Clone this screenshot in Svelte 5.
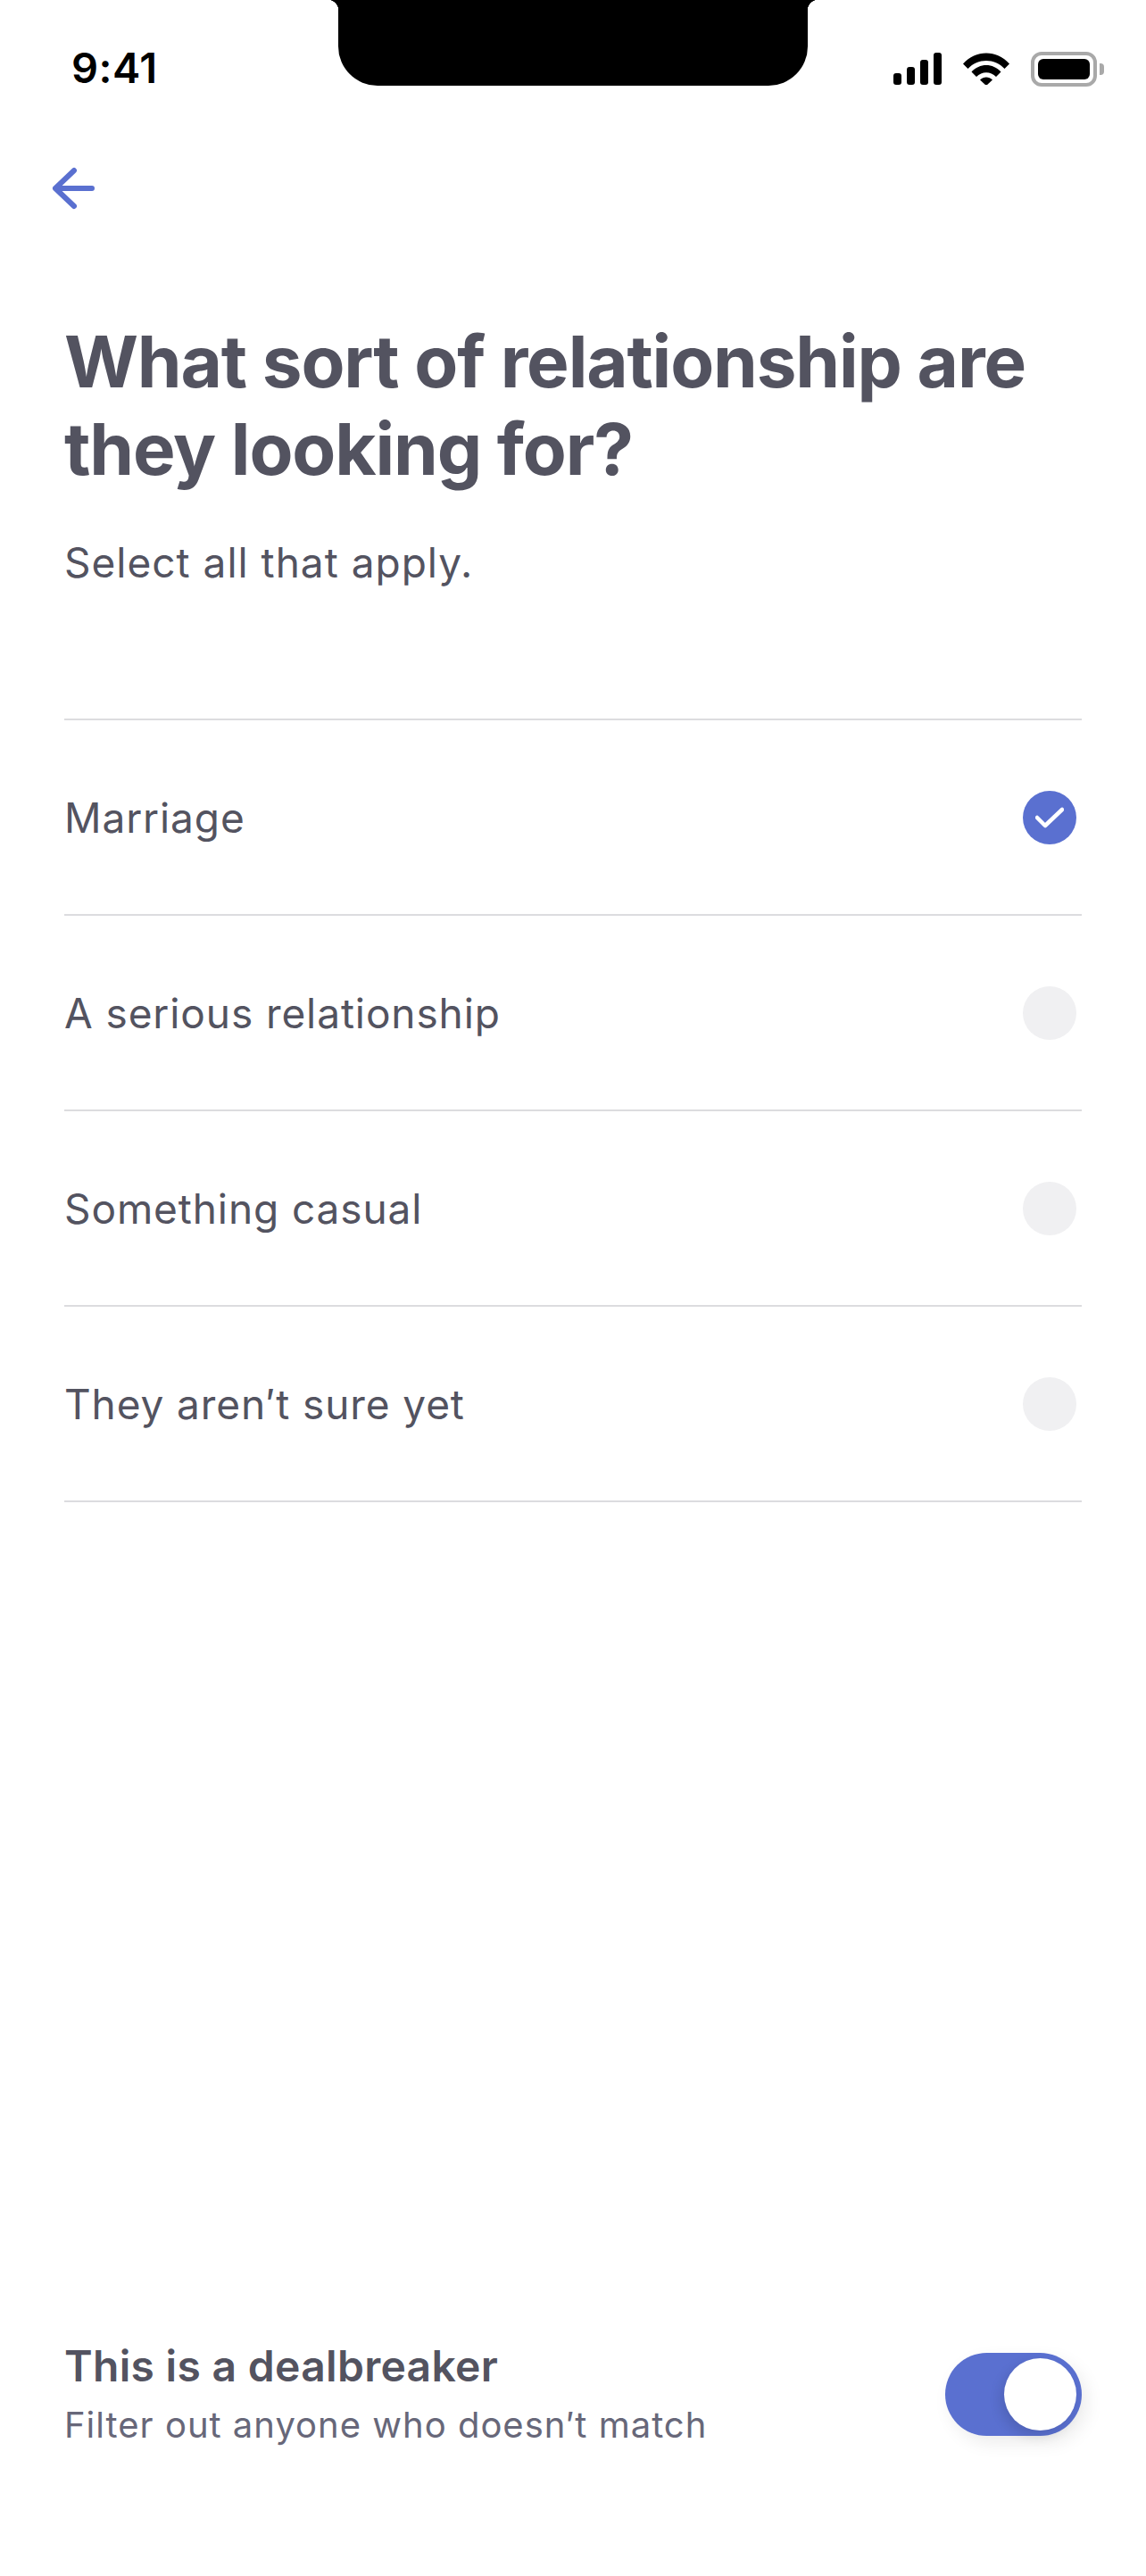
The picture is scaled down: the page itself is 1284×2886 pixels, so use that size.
<script>
    // one row per answer, only the first is picked
    let options = [
        { label: 'Marriage', checked: true },
        { label: 'A serious relationship', checked: false },
        { label: 'Something casual', checked: false },
        { label: 'They aren′t sure yet', checked: false }
    ];
</script>

<main>
    <div class="notch"></div>

    <div class="status">
        <span class="time">9:41</span>
        <div class="status-icons">
            <svg width="54" height="36" viewBox="0 0 54 36" fill="#000">
                <rect x="0" y="23" width="9" height="13" rx="3" />
                <rect x="15" y="16" width="9" height="20" rx="3" />
                <rect x="30" y="8" width="9" height="28" rx="3" />
                <rect x="45" y="0" width="9" height="36" rx="3" />
            </svg>
            <svg width="52" height="36" viewBox="0 0 52 36" fill="#000">
                <path d="M0 12.500C14 -3.500 38 -3.500 52 12.500L46.500 18C35.500 6 16.500 6 5.500 18Z" />
                <path d="M9.500 21.500C18.500 11.500 33.500 11.500 42.500 21.500L37 27C31 20.500 21 20.500 15 27Z" />
                <path d="M19 30.500C23 26.500 29 26.500 33 30.500L26 37Z" />
            </svg>
            <div class="battery">
                <div class="battery-body"><div class="battery-fill"></div></div>
                <div class="battery-cap"></div>
            </div>
        </div>
    </div>

    <button class="back" aria-label="Back">
        <svg width="50" height="48" viewBox="0 0 50 48" fill="none" stroke="#5a70d0" stroke-width="6" stroke-linecap="round" stroke-linejoin="round">
            <path d="M45 24H4M25 4L4 24L25 44" />
        </svg>
    </button>

    <h1>What sort of relationship are they looking for?</h1>
    <p class="hint">Select all that apply.</p>

    <ul class="options">
        {#each options as option}
            <li>
                <span>{option.label}</span>
                {#if option.checked}
                    <span class="radio on">
                        <svg width="32" height="26" viewBox="0 0 32 26" fill="none" stroke="#fff" stroke-width="4.500" stroke-linecap="round" stroke-linejoin="round">
                            <path d="M2 13L11 22L30 4" />
                        </svg>
                    </span>
                {:else}
                    <span class="radio"></span>
                {/if}
            </li>
        {/each}
    </ul>

    <div class="dealbreaker">
        <div>
            <div class="db-title">This is a dealbreaker</div>
            <div class="db-sub">Filter out anyone who doesn′t match</div>
        </div>
        <div class="toggle"><div class="knob"></div></div>
    </div>
</main>

<style>
    :global(body) {
        margin: 0;
        background: #fff;
    }

    main {
        position: relative;
        width: 1284px;
        height: 2886px;
        box-sizing: border-box;
        padding: 0 72px;
        font-family: Inter, "Liberation Sans", sans-serif;
        color: #535360;
        display: flex;
        flex-direction: column;
        overflow: hidden;
    }

    .notch {
        position: absolute;
        top: 0;
        left: 379px;
        width: 526px;
        height: 96px;
        background: #000;
        border-radius: 0 0 44px 44px;
    }

    .notch::before,
    .notch::after {
        content: '';
        position: absolute;
        top: 0;
        width: 12px;
        height: 12px;
    }

    .notch::before {
        left: -12px;
        background: radial-gradient(circle at 0 100%, #fff 12px, #000 12.5px);
    }

    .notch::after {
        right: -12px;
        background: radial-gradient(circle at 100% 100%, #fff 12px, #000 12.5px);
    }

    .status {
        display: flex;
        justify-content: space-between;
        align-items: center;
        height: 60px;
        padding-top: 47px;
        margin: 0 -72px;
        padding-left: 80px;
        padding-right: 47px;
    }

    .time {
        font-size: 47px;
        font-weight: 600;
        letter-spacing: 0.5px;
        color: #000;
        font-family: Inter, sans-serif;
        line-height: 60px;
        margin-top: -3px;
    }

    .status-icons {
        display: flex;
        align-items: center;
        gap: 24px;
    }

    .battery {
        display: flex;
        align-items: center;
        gap: 3px;
    }

    .battery-body {
        width: 74px;
        height: 39px;
        box-sizing: border-box;
        border: 4px solid #a9a9a9;
        border-radius: 12px;
        padding: 4px;
    }

    .battery-fill {
        height: 100%;
        background: #000;
        border-radius: 6px;
    }

    .battery-cap {
        width: 5px;
        height: 13px;
        background: #a9a9a9;
        border-radius: 0 4px 4px 0;
    }

    .back {
        align-self: flex-start;
        margin: 80px 0 0 -14px;
        padding: 0;
        border: 0;
        background: none;
        display: flex;
    }

    h1 {
        margin: 121px 0 0;
        font-size: 80px;
        line-height: 98px;
        font-weight: 700;
        letter-spacing: -1.150px;
        width: 1140px;
    }

    .hint {
        margin: 48px 0 0;
        font-size: 46px;
        line-height: 60px;
        letter-spacing: 1px;
    }

    .options {
        list-style: none;
        margin: 0;
        padding: 0;
        margin-top: 145px;
        border-top: 2px solid #dcdcdf;
        font-size: 46px;
        letter-spacing: 0.900px;
    }

    .options li {
        display: flex;
        align-items: center;
        justify-content: space-between;
        height: 217px;
        border-bottom: 2px solid #dcdcdf;
        padding-right: 6px;
    }

    .radio {
        width: 60px;
        height: 60px;
        border-radius: 50%;
        background: #f0f0f2;
        display: flex;
        align-items: center;
        justify-content: center;
    }

    .radio.on {
        background: #5a70d0;
    }

    .dealbreaker {
        margin-top: auto;
        margin-bottom: 143px;
        display: flex;
        justify-content: space-between;
        align-items: center;
    }

    .db-title {
        font-size: 48px;
        font-weight: 600;
        line-height: 60px;
        letter-spacing: 0.300px;
    }

    .db-sub {
        font-size: 40px;
        line-height: 52px;
        margin-top: 10px;
        letter-spacing: 1px;
        color: #676779;
    }

    .toggle {
        position: relative;
        width: 153px;
        height: 93px;
        border-radius: 47px;
        background: #5a70d0;
        box-shadow: 6px 8px 20px rgba(0, 0, 0, 0.08);
    }

    .knob {
        position: absolute;
        top: 6px;
        right: 6px;
        width: 81px;
        height: 81px;
        border-radius: 50%;
        background: #fff;
        box-shadow: -4px 6px 14px rgba(0, 0, 0, 0.12);
    }
</style>
